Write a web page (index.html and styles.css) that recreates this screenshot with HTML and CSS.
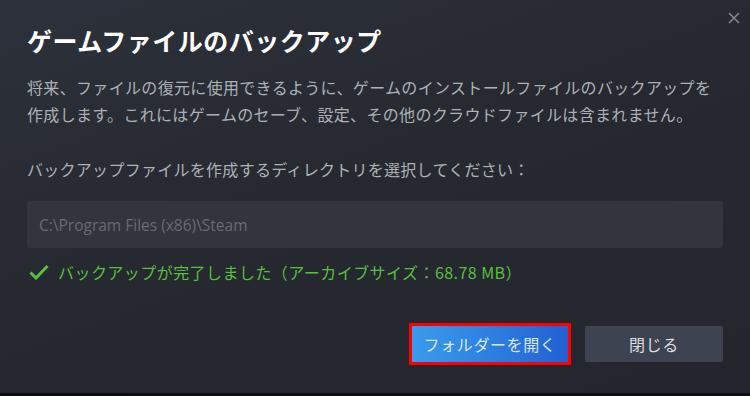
FILE: index.html
```html
<!DOCTYPE html>
<html lang="ja">
<head>
<meta charset="utf-8">
<link rel="stylesheet" href="styles.css">
</head>
<body>
<div class="dialog">
  <button class="close" aria-label="閉じる">
    <svg viewBox="0 0 12 12" width="12" height="12"><path d="M1 1L11 11M11 1L1 11" stroke="currentColor" stroke-width="1.6" fill="none"/></svg>
  </button>
  <h1 class="title">ゲームファイルのバックアップ</h1>
  <p class="desc">将来、ファイルの復元に使用できるように、ゲームのインストールファイルのバックアップを<br>作成します。これにはゲームのセーブ、設定、その他のクラウドファイルは含まれません。</p>
  <p class="label">バックアップファイルを作成するディレクトリを選択してください：</p>
  <div class="input">C:\Program Files (x86)\Steam</div>
  <div class="status">
    <svg class="check" viewBox="0 0 20 16" width="20" height="16"><path d="M1.5 8.5L7 14L18.5 2" stroke="currentColor" stroke-width="3" fill="none"/></svg>
    <span>バックアップが完了しました（アーカイブサイズ：68.78 MB）</span>
  </div>
  <div class="actions">
    <button class="btn primary">フォルダーを開く</button>
    <button class="btn secondary">閉じる</button>
  </div>
</div>
<div class="strip"></div>
</body>
</html>
```
FILE: styles.css
```css
html, body {
  margin: 0;
  padding: 0;
  background: #0f1013;
}
body {
  width: 750px;
  height: 396px;
  overflow: hidden;
  font-family: "Noto Sans CJK JP", "Noto Sans", sans-serif;
}
.dialog {
  position: relative;
  box-sizing: border-box;
  height: 393px;
  padding: 24px 27px 0 27px;
  background: linear-gradient(160deg, #2d313b 0%, #262930 45%, #23262d 100%);
}
.close {
  position: absolute;
  top: 11px;
  right: 9px;
  width: 14px;
  height: 14px;
  padding: 1px;
  border: 0;
  background: none;
  color: #7d8692;
  display: flex;
  align-items: center;
  justify-content: center;
}
.title {
  margin: 0;
  font-size: 25px;
  line-height: 32px;
  font-weight: 700;
  color: #ffffff;
  letter-spacing: 0.5px;
}
.desc {
  margin: 18px 0 0;
  font-size: 16px;
  line-height: 27px;
  color: #acb1b7;
  letter-spacing: 0.33px;
}
.label {
  margin: 28px 0 0;
  font-size: 16px;
  line-height: 27px;
  color: #acb1b7;
  letter-spacing: 0.28px;
}
.input {
  margin-top: 18px;
  height: 47px;
  box-sizing: border-box;
  padding: 0 12px;
  display: flex;
  align-items: center;
  background: #32353d;
  border-radius: 3px;
  color: #676b73;
  font-family: "Open Sans", "Noto Sans", sans-serif;
  font-size: 15.5px;
}
.status {
  margin-top: 12px;
  height: 24px;
  display: flex;
  align-items: center;
  color: #59bf40;
  font-size: 16px;
  letter-spacing: 0.45px;
}
.check {
  margin-left: 2px;
  margin-right: 9px;
}
.actions {
  margin-top: 42px;
  display: flex;
  justify-content: flex-end;
  gap: 17px;
}
.btn {
  height: 36px;
  border: 0;
  border-radius: 2px;
  font-family: "Noto Sans CJK JP", sans-serif;
  font-size: 16px;
  letter-spacing: 0.6px;
  padding: 0;
}
.primary {
  width: 156px;
  background: linear-gradient(90deg, #3b9bed 0%, #2d7fe0 50%, #2360d4 100%);
  color: #d9e6f5;
  outline: 3px solid #ff0000;
  border-radius: 0;
}
.secondary {
  width: 138px;
  background: #3d4350;
  color: #dcdee0;
}
.strip {
  height: 3px;
  background: #0c0d10;
}
```
